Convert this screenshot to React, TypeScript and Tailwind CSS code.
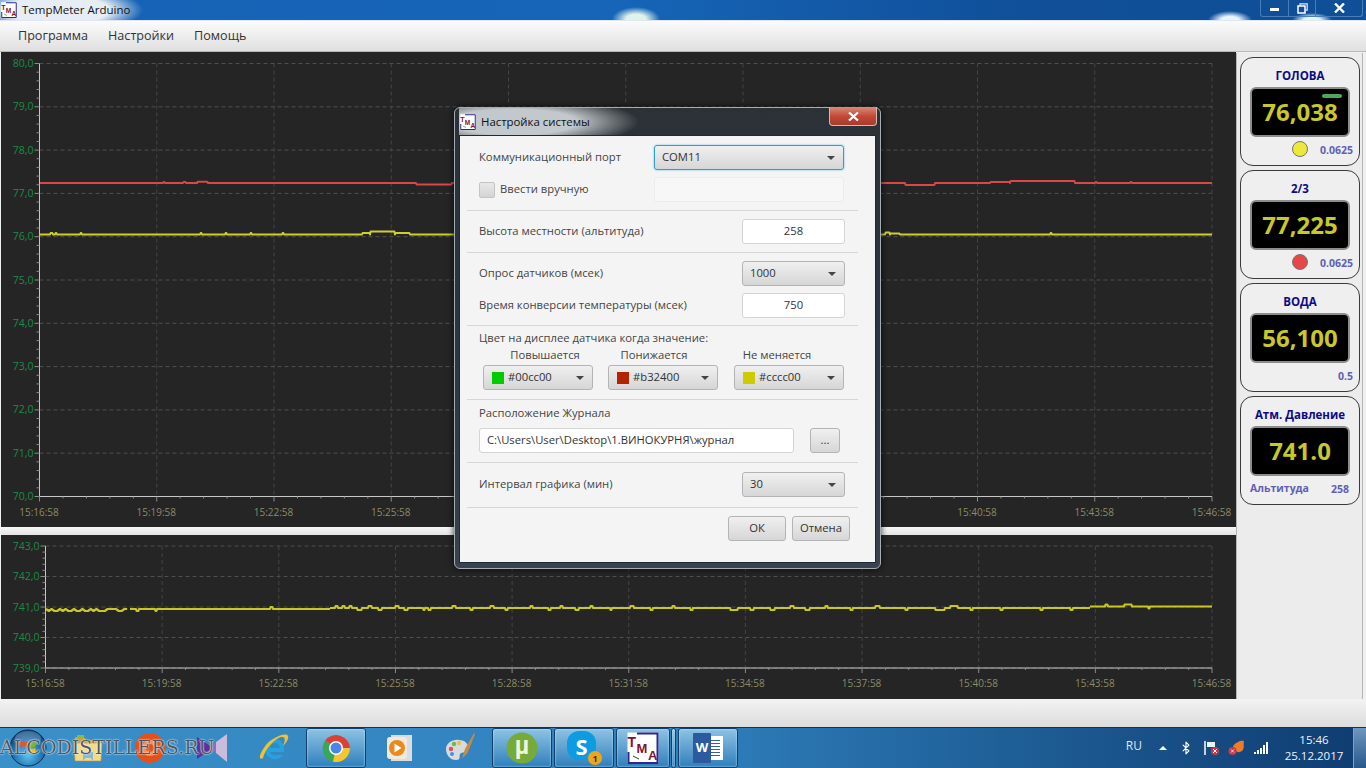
import { Bluetooth } from "lucide-react";

const range = (n: number) => Array.from({ length: n }, (_, i) => i);

type Bump = [number, number, number];
function linePoints(x0: number, x1: number, y: number, bumps: Bump[]) {
  const p: string[] = [`${x0},${y}`];
  for (const [a, b, d] of bumps) {
    p.push(`${a},${y}`, `${a + 0.6},${y + d}`, `${b - 0.6},${y + d}`, `${b},${y}`);
  }
  p.push(`${x1},${y}`);
  return p.join(" ");
}

type Series = { color: string; points: string; width: number };
function Chart(props: {
  vb: string; w: number; h: number; left: number; right: number; top: number; bottom: number;
  yLabels: string[]; series: Series[]; labelY: number; className?: string;
}) {
  const { left, right, top, bottom, yLabels } = props;
  const times = ["15:16:58", "15:19:58", "15:22:58", "15:25:58", "15:28:58", "15:31:58", "15:34:58", "15:37:58", "15:40:58", "15:43:58", "15:46:58"];
  const dx = (right - left) / 10;
  const dy = (bottom - top) / (yLabels.length - 1);
  return (
    <svg viewBox={props.vb} width={props.w} height={props.h} className={props.className}>
      <rect x="0" y="0" width="1400" height="800" fill="#252525" />
      {yLabels.map((_, i) => (
        <line key={i} x1={left} x2={right} y1={top + i * dy} y2={top + i * dy} stroke="#4f4f4f" strokeDasharray="4 3" />
      ))}
      {times.map((_, i) => (
        <line key={i} x1={left + i * dx} x2={left + i * dx} y1={top} y2={bottom} stroke="#444" strokeDasharray="4 3" />
      ))}
      {props.series.map((s, i) => (
        <polyline key={i} points={s.points} fill="none" stroke={s.color} strokeWidth={s.width} strokeLinejoin="round" />
      ))}
      <line x1={left} x2={left} y1={top} y2={bottom} stroke="#c8c8c8" />
      <line x1={left} x2={right} y1={bottom} y2={bottom} stroke="#c8c8c8" />
      {range((yLabels.length - 1) * 5 + 1).map((i) => (
        <line key={i} x1={i % 5 === 0 ? left - 5 : left - 3} x2={left} y1={top + (i * dy) / 5} y2={top + (i * dy) / 5} stroke="#8a8a8a" />
      ))}
      {range(51).map((i) => (
        <line key={i} x1={left + (i * dx) / 5} x2={left + (i * dx) / 5} y1={bottom} y2={bottom + (i % 5 === 0 ? 5 : 2)} stroke="#8a8a8a" />
      ))}
      {yLabels.map((t, i) => (
        <text key={t} x={left - 6} y={top + i * dy + 3.5} textAnchor="end" fontSize="10.5" fontFamily="'Open Sans', sans-serif" fill="#1d8a45">{t}</text>
      ))}
      {times.map((t, i) => (
        <text key={t} x={left + i * dx - 0.5} y={props.labelY} textAnchor="middle" fontSize="10" fontFamily="'Open Sans', sans-serif" fill="#8b8b68">{t}</text>
      ))}
    </svg>
  );
}

function Gauge(props: { title: string; value: string; led?: boolean; dot?: string; note?: string; left?: string; last?: boolean }) {
  return (
    <div className="flex h-[109px] w-[120px] shrink-0 flex-col rounded-[13px] border border-[#3a3a3a] bg-[#efefef]">
      <div className="flex h-[29px] items-end justify-center pb-[3px] text-[11.500px] leading-[16px] font-bold text-[#0b0b86]">{props.title}</div>
      <div className="relative mx-[9px] flex h-[50px] items-center justify-center rounded-[6px] border-2 border-[#8c8c8c] bg-black text-[24px] leading-none font-bold text-[#c8c828]">
        {props.value}
        {props.led && <span className="absolute top-[5px] right-[6px] h-[4px] w-[20px] rounded-full bg-[#4fa85a]" />}
      </div>
      <div className={`relative flex flex-1 items-center justify-end text-[10.500px] font-bold text-[#5f5fb4] ${props.last ? "pr-[10px]" : "pr-[6px]"}`}>
        {props.dot && <span className="absolute top-[4px] left-[51px] h-[16px] w-[16px] rounded-full border border-[#777]" style={{ backgroundColor: props.dot }} />}
        {props.left && <span className="absolute top-[5px] left-[9px]">{props.left}</span>}
        <span>{props.note}</span>
      </div>
    </div>
  );
}

const Arrow = () => <span className="h-0 w-0 border-x-[4px] border-t-[4px] border-x-transparent border-t-[#444]" />;

function Combo(props: { text: string; w: string; swatch?: string; focus?: boolean }) {
  return (
    <div className={`flex h-[25px] items-center justify-between rounded-[3px] border bg-gradient-to-b from-[#f0f0f0] to-[#d6d6d6] pr-[8px] ${props.w} ${props.swatch ? "pl-[8px]" : "pl-[7px]"} ${props.focus ? "border-[#2f9fd0] shadow-[0_0_2px_#49b6e6]" : "border-[#b4b4b4]"}`}>
      <span className="flex items-center gap-[4px] text-[#333]">
        {props.swatch && <span className="h-[12px] w-[12px]" style={{ backgroundColor: props.swatch }} />}
        {props.text}
      </span>
      <Arrow />
    </div>
  );
}

const Field = (props: { text: string; w: string; center?: boolean }) => (
  <div className={`flex h-[25px] items-center rounded-[3px] border border-[#d4d4d4] bg-white text-[#333] ${props.w} ${props.center ? "justify-center" : "pl-[7px]"}`}>{props.text}</div>
);
const Sep = (props: { mt: string }) => <div className={`ml-[7px] h-px w-[391px] shrink-0 bg-[#d6d6d6] ${props.mt}`} />;
const Btn = (props: { text: string; w: string }) => (
  <div className={`flex h-[25px] items-center justify-center rounded-[3px] border border-[#b4b4b4] bg-gradient-to-b from-[#f0f0f0] to-[#d6d6d6] text-[#333] ${props.w}`}>{props.text}</div>
);

function TmaIcon({ size }: { size: number }) {
  return (
    <svg width={size} height={size} viewBox="0 0 32 32" className="shrink-0">
      <rect x="0.5" y="0.5" width="31" height="31" fill="#fff" />
      <path d="M10 1.5H30.5V31H1.5V20" fill="none" stroke="#2b2a8c" strokeWidth="2" />
      <g fontFamily="'Liberation Sans', sans-serif" fontWeight="700" fill="#7d1430">
        <text x="0.500" y="15" fontSize="14">T</text>
        <text x="9.500" y="21" fontSize="13">M</text>
        <text x="21" y="28" fontSize="13">A</text>
      </g>
      <path d="M6 24l6 3" stroke="#333" strokeWidth="1" />
    </svg>
  );
}

const StartOrb = () => (
  <svg width="38" height="38" viewBox="0 0 38 38">
    <defs>
      <radialGradient id="orb" cx="50%" cy="70%" r="70%"><stop offset="0" stopColor="#5fc1ee" /><stop offset="0.6" stopColor="#1a6fb0" /><stop offset="1" stopColor="#0d3c6c" /></radialGradient>
    </defs>
    <circle cx="19" cy="19" r="18" fill="url(#orb)" stroke="#0c2f55" />
    <ellipse cx="19" cy="10" rx="13" ry="8" fill="#fff" opacity="0.22" />
    <path d="M11 13c2-1 5-1 7 0v5c-2-1-5-1-7 0z" fill="#e2552c" />
    <path d="M19.5 13c2 1 5 1 7 0v5c-2 1-5 1-7 0z" fill="#7ab829" />
    <path d="M11 19c2-1 5-1 7 0v5c-2-1-5-1-7 0z" fill="#3d9be0" />
    <path d="M19.5 19c2 1 5 1 7 0v5c-2 1-5 1-7 0z" fill="#f4b921" />
  </svg>
);
const FolderIcon = () => (
  <svg width="30" height="30" viewBox="0 0 30 30">
    <path d="M2 4h9l2 3h15v6H2z" fill="#c9a13a" />
    <rect x="4" y="2" width="7" height="3" fill="#7cc04a" />
    <path d="M1 10h28l-1 18H2z" fill="#f3d98a" stroke="#b89540" strokeWidth="0.6" />
    <path d="M10 28v-9h10v9l-2.500-3h-5z" fill="#8eb8d8" />
  </svg>
);
const OrangeIcon = () => (
  <svg width="30" height="30" viewBox="0 0 30 30">
    <circle cx="15" cy="15" r="15" fill="#e5501a" />
    <path d="M15 7a8 8 0 1 0 .01 0zM15 11a4 4 0 1 1-.01 0z" fill="#f08a5a" />
  </svg>
);
const VsIcon = () => (
  <svg width="32" height="30" viewBox="0 0 32 30">
    <path d="M1 4l13 9v4L1 26z" fill="#5b2d9e" />
    <path d="M31 1v28l-11-9v-11z" fill="#cbbbdc" />
    <path d="M14 13l6-4v11l-6-3z" fill="#8d6cb8" />
  </svg>
);
const IeIcon = () => (
  <svg width="32" height="30" viewBox="0 0 32 30">
    <path d="M17 6a10 10 0 0 0-10 10 10 10 0 0 0 18 6h-6a5 5 0 0 1-7-3h14c1-7-3-13-9-13zm-5 9a5 5 0 0 1 10 0z" fill="#27a2e0" />
    <path d="M5 25C0 28 1 21 8 12 15 4 28-1 30 3c1 3-2 7-5 10 2-5 3-9-1-9C19 4 8 14 5 25z" fill="#f2c12e" />
  </svg>
);
const ChromeIcon = () => (
  <svg width="30" height="30" viewBox="0 0 30 30">
    <path d="M15 15L4 7.500A14 14 0 0 1 29 15z" fill="#dc3f33" />
    <path d="M15 15L4 7.500A14 14 0 0 0 12 28.700z" fill="#3aa757" />
    <path d="M15 15h14A14 14 0 0 1 12 28.700z" fill="#f6c52f" />
    <circle cx="15" cy="15" r="7" fill="#fff" />
    <circle cx="15" cy="15" r="5.500" fill="#4a86e8" />
  </svg>
);
const MediaIcon = () => (
  <svg width="26" height="28" viewBox="0 0 26 28" className="ml-[4px]">
    <rect x="4" y="1" width="21" height="26" fill="#d9dde2" />
    <rect x="0" y="3" width="20" height="22" rx="3" fill="#f0e9dc" />
    <circle cx="10" cy="14" r="8" fill="#ea8a1e" />
    <path d="M7.500 9.500l7 4.500-7 4.500z" fill="#fff" />
  </svg>
);
const PaintIcon = () => (
  <svg width="32" height="32" viewBox="0 0 32 32">
    <path d="M2 17c0-6 7-10 13-9 6 0 10 4 9 9-1 5-6 2-8 5-1 3 1 6-4 6-6 0-10-5-10-11z" fill="#d6dbe0" />
    <circle cx="7" cy="17" r="2.200" fill="#d9534f" /><circle cx="10" cy="12" r="2.200" fill="#7bb642" />
    <circle cx="15" cy="11" r="2.200" fill="#f0c040" /><circle cx="8" cy="22" r="2" fill="#4a90d9" />
    <path d="M30 1l-9 16-3 9c3-2 5-4 6-6l7-18z" fill="#c98a3a" />
  </svg>
);
const TorrentIcon = () => (
  <svg width="32" height="32" viewBox="0 0 32 32" fontFamily="'Liberation Sans', sans-serif">
    <circle cx="16" cy="16" r="15.500" fill="#76ab3a" />
    <text x="16" y="22" textAnchor="middle" fontSize="25" fontWeight="700" fill="#eef5df">µ</text>
  </svg>
);
const SkypeIcon = () => (
  <div className="relative h-[34px] w-[34px]">
    <div className="absolute top-0 left-0 flex h-[29px] w-[29px] items-center justify-center rounded-[12px] bg-[#0d9be2] text-[22px] leading-none font-bold text-white">S</div>
    <div className="absolute right-[-1px] bottom-[0px] flex h-[14px] w-[14px] items-center justify-center rounded-full bg-[#eda51e] text-[9px] leading-none font-bold text-[#333]">1</div>
  </div>
);
const WordIcon = () => (
  <div className="relative h-[30px] w-[30px]">
    <div className="absolute top-[3px] right-0 flex h-[24px] w-[20px] flex-col justify-center gap-[2px] bg-white px-[3px]">
      {range(6).map((i) => <span key={i} className="h-px bg-[#345f9c]" />)}
    </div>
    <div className="absolute top-0 left-0 flex h-[30px] w-[18px] items-center justify-center rounded-[1px] bg-[#2c5a9e] text-[13px] font-bold text-white">W</div>
  </div>
);

function Task({ children, active, w = "w-[60px]" }: { children?: React.ReactNode; active?: boolean; w?: string }) {
  return (
    <div className={`flex h-[40px] shrink-0 items-center justify-center ${w} ${active ? "rounded-[3px] border border-[#123f6c] bg-gradient-to-b from-[#8cc3e4] to-[#2d7fbc] shadow-[inset_0_0_2px_#d8eefc]" : ""}`}>
      {children}
    </div>
  );
}

const redMain: Bump[] = [[163, 165, -1], [183, 186, -1], [197, 208, -1.2], [416, 452, 1.5], [905, 935, 2], [990, 1010, -1], [1010, 1075, -2], [1095, 1097, -1], [1130, 1132, -1]];
const yellowMain: Bump[] = [[50, 53, -1.5], [55, 57, -1.5], [80, 82, -1.5], [200, 202, -1.5], [225, 227, -1.5], [250, 252, -1.5], [282, 284, -1.5], [362, 370, -1.5], [370, 395, -3], [395, 410, -1.5], [885, 890, -2], [890, 900, -1], [1050, 1052, -1.5]];

const wig = [609, 611, 609, 611, 611, 609, 611, 609, 611, 611, 609, 611, 611, 609, 611, 611, 609, 611, 609, 611, 611, 611, 609, 609, 609, 609, 611, 611, 609, 609];
const pressLeft = wig.map((y, i) => `${46 + i * 2.8},${y}`).join(" ");
const pressBumps: Bump[] = [[335, 338, -2], [342, 345, -2], [349, 352, -2], [357, 362, 2], [368, 372, -2], [378, 382, 2], [395, 399, -2], [404, 408, 2], [423, 425, 2], [428, 431, 2], [452, 456, -2], [470, 473, 2], [490, 494, -2], [505, 508, 2], [530, 533, -2], [548, 551, 2], [560, 563, -2], [575, 579, 2], [590, 593, -2], [610, 612, 2], [630, 634, -2], [650, 653, 2], [672, 675, -2], [690, 693, 2], [730, 738, 2], [750, 754, 2], [770, 775, 2], [790, 794, -2], [805, 810, 2], [825, 828, -2], [850, 853, 2], [875, 880, -2], [905, 908, 2], [935, 945, 2], [950, 958, -2], [970, 973, 2], [1000, 1003, 2], [1040, 1043, 2], [1070, 1073, 2]];

const font = { fontFamily: "'Open Sans', 'Noto Sans', sans-serif" };

export default function App() {
  return (
    <div className="relative flex h-[768px] w-[1366px] flex-col overflow-hidden bg-[#f0f0f0]" style={font}>
      {/* window title bar */}
      <div className="relative flex h-[21px] shrink-0 items-center border-b border-[#dfe8f2] bg-[radial-gradient(ellipse_85px_24px_at_58px_10px,#e6edf4_60%,transparent),radial-gradient(ellipse_24px_12px_at_636px_19px,#dff3ec_40%,transparent),radial-gradient(ellipse_22px_9px_at_1230px_20px,#e6f4ff_40%,transparent),radial-gradient(ellipse_20px_7px_at_1312px_20px,#e6f4ff_40%,transparent),linear-gradient(to_right,#1762b6,#1665b8_45%,#104f99_75%,#0f4f97)] pl-[1px] text-[11.500px] text-[#111]">
        <TmaIcon size={16} />
        <span className="ml-[5px]">TempMeter Arduino</span>
        <div className="absolute top-0 right-[3px] flex h-[17px] w-[103px] rounded-b-[3px] border border-t-0 border-[#4a7db5] text-white">
          <div className="flex w-[28px] items-center justify-center border-r border-[#4a7db5]"><span className="mt-[2px] h-[3px] w-[9px] bg-white" /></div>
          <div className="flex w-[27px] items-center justify-center border-r border-[#4a7db5]">
            <svg width="11" height="11" viewBox="0 0 11 11"><path d="M3 2.500V.8h7.200v6.400H8.500" fill="none" stroke="#dfe8f2" strokeWidth="1.200" /><rect x="1" y="3" width="7" height="7" fill="none" stroke="#fff" strokeWidth="1.500" /></svg>
          </div>
          <div className="flex flex-1 items-center justify-center">
            <svg width="11" height="10" viewBox="0 0 11 10"><path d="M1 .5l9 9M10 .5l-9 9" stroke="#fff" strokeWidth="2.400" /></svg>
          </div>
        </div>
      </div>

      {/* menu */}
      <div className="flex h-[31px] shrink-0 items-center gap-[20px] border-b border-[#b8b8b8] bg-gradient-to-b from-[#fbfbfb] to-[#e0e0e0] pl-[18px] text-[12.600px] text-[#333]">
        <span>Программа</span><span>Настройки</span><span>Помощь</span>
      </div>

      {/* body */}
      <div className="flex h-[647px] shrink-0">
        <div className="flex w-[1236px] flex-col pl-[1px]">
          <Chart vb="1 52 1235 475" w={1235} h={475} left={39.5} right={1212} top={63.5} bottom={496.5} labelY={516}
            yLabels={["80,0", "79,0", "78,0", "77,0", "76,0", "75,0", "74,0", "73,0", "72,0", "71,0", "70,0"]}
            series={[
              { color: "#d9474b", width: 2, points: linePoints(40, 1212, 183, redMain) },
              { color: "#cfcf2c", width: 2, points: linePoints(40, 1212, 234.5, yellowMain) },
            ]} />
          <div className="h-[8px] shrink-0 bg-gradient-to-b from-[#f6f6f6] to-[#e4e4e4]" />
          <Chart vb="1 535 1235 164" w={1235} h={164} left={45.5} right={1212} top={546} bottom={668} labelY={687}
            yLabels={["743,0", "742,0", "741,0", "740,0", "739,0"]}
            series={[
              { color: "#c8c820", width: 2.2, points: pressLeft },
              { color: "#c8c820", width: 2.2, points: linePoints(130, 330, 609, [[136, 139, 2], [155, 157, 2], [270, 273, -2]]) },
              { color: "#c8c820", width: 2.2, points: linePoints(330, 1090, 608, pressBumps) },
              { color: "#c8c820", width: 2.2, points: linePoints(1090, 1212, 606.5, [[1105, 1108, -2], [1124, 1132, -2], [1148, 1150, 2]]) },
            ]} />
        </div>

        <div className="mt-[1px] flex h-[646px] w-[127px] flex-col gap-[4px] border-x border-[#b4b4b4] bg-[#ececec] pt-[4px] pl-[3px]">
          <Gauge title="ГОЛОВА" value="76,038" led dot="#ede93c" note="0.0625" />
          <Gauge title="2/3" value="77,225" dot="#e64848" note="0.0625" />
          <Gauge title="ВОДА" value="56,100" note="0.5" />
          <Gauge title="Атм. Давление" value="741.0" left="Альтитуда" note="258" last />
        </div>
      </div>

      {/* status bar */}
      <div className="h-[28px] shrink-0 bg-gradient-to-b from-[#f3f3f3] to-[#dcdcdc]" />

      {/* taskbar */}
      <div className="relative flex h-[41px] shrink-0 items-center gap-[2px] border-t border-[#17324f] bg-gradient-to-r from-[#3a90c8] via-[#2f80bd] to-[#0f3c70]">
        <Task w="w-[56px]"><StartOrb /></Task>
        <Task><FolderIcon /></Task>
        <Task><OrangeIcon /></Task>
        <Task><VsIcon /></Task>
        <Task><IeIcon /></Task>
        <Task active><ChromeIcon /></Task>
        <Task><MediaIcon /></Task>
        <Task><PaintIcon /></Task>
        <Task active><TorrentIcon /></Task>
        <Task active><SkypeIcon /></Task>
        <div className="flex w-[60px] shrink-0 gap-[1px]">
          <Task active w="w-[54px]"><TmaIcon size={32} /></Task>
          <Task active w="w-[5px]" />
        </div>
        <Task active><WordIcon /></Task>

        <div className="ml-auto flex h-full items-center text-white">
          <span className="mb-[4px] text-[12px] text-[#dbe7f2]">RU</span>
          <span className="ml-[17px] h-0 w-0 border-x-[4px] border-b-[4px] border-x-transparent border-b-white" />
          <Bluetooth className="ml-[12px] text-white" size={14} />
          <svg className="ml-[11px]" width="18" height="16" viewBox="0 0 18 16">
            <path d="M1 1v14" stroke="#fff" strokeWidth="1.500" /><path d="M3 2h8v5H3z" fill="#eef3f8" />
            <circle cx="11" cy="11" r="4" fill="#c83a4a" /><path d="M9 9l4 4M13 9l-4 4" stroke="#fff" />
          </svg>
          <svg className="ml-[6px]" width="18" height="16" viewBox="0 0 18 16">
            <path d="M5 6c3-4 8-6 11-5-1 3 1 7-2 10-3 2-7 2-9-5z" fill="#ee7b25" />
            <circle cx="4.500" cy="11" r="4" fill="#c8384e" /><path d="M3 9.500l3 3M6 9.500l-3 3" stroke="#fff" strokeWidth="0.800" />
          </svg>
          <svg className="ml-[8px]" width="16" height="12" viewBox="0 0 16 12" fill="#fff">
            <rect x="0" y="10" width="2" height="2" /><rect x="3" y="8" width="2" height="4" /><rect x="6" y="6" width="2" height="6" /><rect x="9" y="3" width="2" height="9" /><rect x="12" y="0" width="2" height="12" />
          </svg>
          <div className="ml-[12px] flex w-[64px] flex-col items-center text-[11.500px] leading-[16px] text-[#eef4fa]">
            <span>15:46</span><span>25.12.2017</span>
          </div>
          <div className="ml-[7px] h-full w-[13px] border-l border-[#7ea2c4] bg-gradient-to-b from-[#6f97bd] to-[#28588c]" />
        </div>

        <div className="pointer-events-none absolute top-[7px] left-0 text-[19px] leading-[24px] text-[#4c5862] [text-shadow:0_0_2px_#fff,0_0_1px_#fff]" style={{ fontFamily: "'DejaVu Serif', serif" }}>ALCODISTILLERS.RU</div>
      </div>

      {/* dialog */}
      <div className="absolute top-[107px] left-[454px] flex h-[462px] w-[427px] flex-col rounded-[6px] border border-[#a4adb4] bg-gradient-to-b from-[#2c3136] via-[#2a3644] to-[#39424d] px-[4px] pb-[5px] shadow-[0_0_6px_rgba(0,0,0,0.8)]">
        <div className="relative flex h-[27px] shrink-0 items-center bg-[radial-gradient(ellipse_125px_26px_at_55px_14px,#c2c8cc_50%,transparent)] pl-[1px] text-[11.400px] text-[#111]">
          <TmaIcon size={16} />
          <span className="ml-[5px]">Настройка системы</span>
          <div className="absolute top-[-1px] right-[-1px] flex h-[19px] w-[48px] items-center justify-center rounded-b-[4px] border border-t-0 border-[#d8b8ae] bg-gradient-to-b from-[#d98a7a] via-[#c24a38] to-[#a83a2c]">
            <svg width="11" height="9" viewBox="0 0 11 9"><path d="M1 .5l9 8M10 .5l-9 8" stroke="#fff" strokeWidth="2.200" /></svg>
          </div>
        </div>

        <div className="flex flex-1 flex-col border border-[#1d2a38] bg-[#f4f4f4] text-[11.250px] text-[#444]">
          <div className="mt-[9px] flex shrink-0 items-center justify-between pr-[30px] pl-[19px]">
            <span>Коммуникационный порт</span>
            <Combo text="COM11" w="w-[190px] mr-[1px]" focus />
          </div>
          <div className="mt-[7px] flex shrink-0 items-center justify-between pr-[30px] pl-[19px]">
            <span className="flex items-center gap-[5px]">
              <span className="h-[16px] w-[16px] rounded-[2px] border border-[#c4c4c4] bg-gradient-to-b from-[#e8e8e8] to-[#d4d4d4]" />Ввести вручную
            </span>
            <div className="mr-[1px] h-[25px] w-[190px] rounded-[3px] border border-[#ececec] bg-[#f7f7f7]" />
          </div>
          <Sep mt="mt-[8px]" />

          <div className="mt-[8px] flex shrink-0 items-center justify-between pr-[30px] pl-[19px]">
            <span>Высота местности (альтитуда)</span><Field text="258" w="w-[103px]" center />
          </div>
          <Sep mt="mt-[8px]" />

          <div className="mt-[8px] flex shrink-0 items-center justify-between pr-[30px] pl-[19px]">
            <span>Опрос датчиков (мсек)</span><Combo text="1000" w="w-[103px]" />
          </div>
          <div className="mt-[7px] flex shrink-0 items-center justify-between pr-[30px] pl-[19px]">
            <span>Время конверсии температуры (мсек)</span><Field text="750" w="w-[103px]" center />
          </div>
          <Sep mt="mt-[7px]" />

          <div className="mt-[5px] h-[14px] shrink-0 pl-[19px] leading-[14px]">Цвет на дисплее датчика когда значение:</div>
          <div className="mt-[3px] flex h-[14px] shrink-0 pl-[23px] leading-[14px]">
            <span className="w-[124px] text-center">Повышается</span>
            <span className="w-[94px] text-center">Понижается</span>
            <span className="w-[152px] text-center">Не меняется</span>
          </div>
          <div className="mt-[3px] flex shrink-0 gap-[15px] pl-[23px]">
            <Combo text="#00cc00" w="w-[110px]" swatch="#00cc00" />
            <Combo text="#b32400" w="w-[110px]" swatch="#b32400" />
            <Combo text="#cccc00" w="w-[110px] ml-[1px]" swatch="#cccc00" />
          </div>
          <Sep mt="mt-[9px]" />

          <div className="mt-[6px] h-[14px] shrink-0 pl-[19px] leading-[14px]">Расположение Журнала</div>
          <div className="mt-[8px] flex shrink-0 items-center pl-[19px]">
            <Field text="C:\Users\User\Desktop\1.ВИНОКУРНЯ\журнал" w="w-[315px]" />
            <Btn text="..." w="w-[30px] ml-[16px]" />
          </div>
          <Sep mt="mt-[9px]" />

          <div className="mt-[9px] flex shrink-0 items-center justify-between pr-[30px] pl-[19px]">
            <span>Интервал графика (мин)</span><Combo text="30" w="w-[103px]" />
          </div>
          <Sep mt="mt-[10px]" />

          <div className="mt-[8px] flex shrink-0 justify-end gap-[6px] pr-[25px]">
            <Btn text="ОК" w="w-[58px]" /><Btn text="Отмена" w="w-[58px]" />
          </div>
        </div>
      </div>
    </div>
  );
}
